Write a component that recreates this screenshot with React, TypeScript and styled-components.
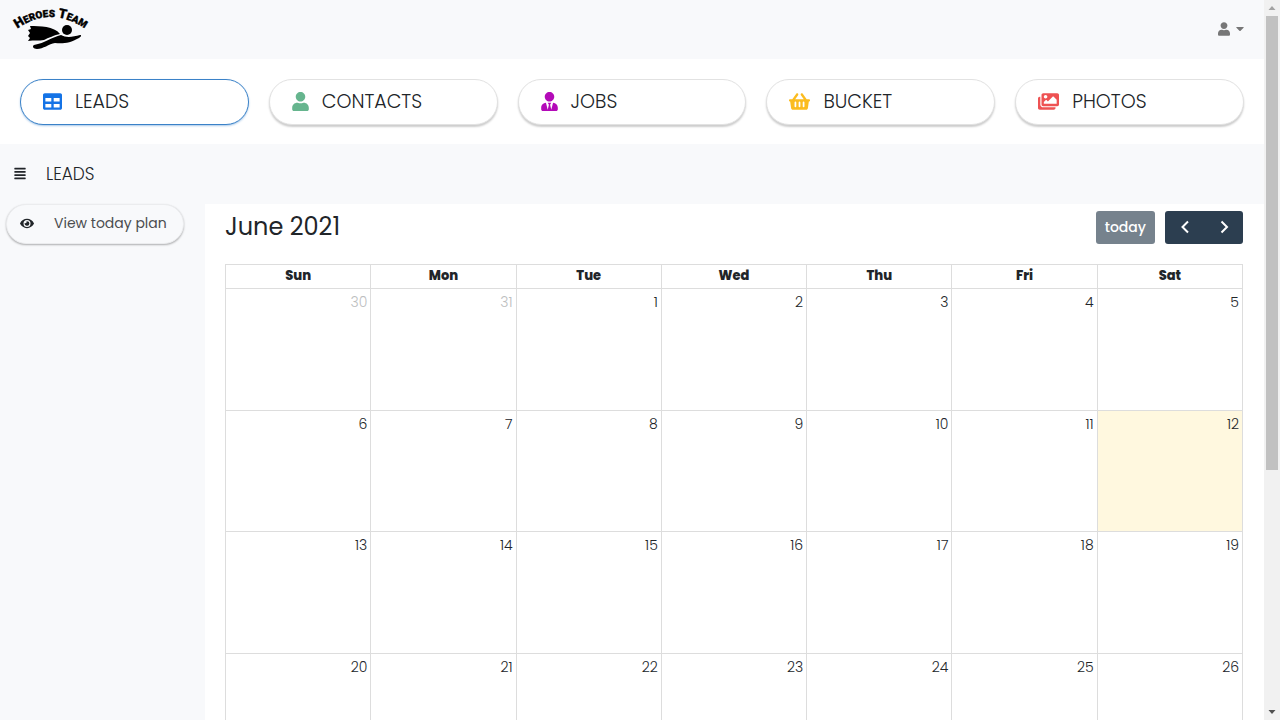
import React from "react";
import styled, { createGlobalStyle, css } from "styled-components";
import {
  FaAlignJustify,
  FaCaretDown,
  FaEye,
  FaImages,
  FaShoppingBasket,
  FaTable,
  FaUser,
  FaUserTie,
} from "react-icons/fa";

const GlobalStyle = createGlobalStyle`
  *, *::before, *::after { box-sizing: border-box; }
  body {
    margin: 0;
    background: #f8f9fb;
    color: #212529;
    font-family: Poppins, Inter, sans-serif;
    font-size: 14px;
    line-height: 20px;
  }
  button { font: inherit; cursor: pointer; }
`;

const Shell = styled.div`
  display: flex;
  height: 100vh;
`;

const Page = styled.div`
  flex: 1;
  min-width: 0;
  overflow-y: auto;
  scrollbar-width: none;
`;

const TopBar = styled.header`
  display: flex;
  align-items: center;
  justify-content: space-between;
  padding: 4px 20px 5px 12px;
`;

const Logo = styled.svg`
  display: block;
  width: 78px;
  height: 50px;
  overflow: visible;
`;

const Icon = styled.span<{ $width: number; $height: number; $color?: string }>`
  display: flex;
  color: ${(p) => p.$color ?? "inherit"};

  svg {
    width: ${(p) => p.$width}px;
    height: ${(p) => p.$height}px;
  }
`;

const AccountButton = styled.button`
  display: flex;
  align-items: center;
  gap: 6px;
  padding: 0 0 1px;
  border: 0;
  background: none;
  color: #777;
`;

const Modules = styled.nav`
  display: grid;
  grid-template-columns: repeat(5, 1fr);
  gap: 20px;
  padding: 20px 20px 19px;
  background: #fff;
`;

const pill = css`
  display: flex;
  align-items: center;
  border-radius: 24px;
  box-shadow: 0 1px 2px rgba(0, 0, 0, 0.3);
`;

const ModuleLink = styled.a<{ $active?: boolean }>`
  ${pill}
  gap: 13px;
  height: 46px;
  padding: 0 22px;
  border: 1px solid ${(p) => (p.$active ? "#3b82c8" : "#e2e2e2")};
  background: #fff;
  box-shadow: ${(p) => (p.$active ? "0 1px 2px rgba(40, 120, 200, 0.4)" : "0 2px 2px rgba(0, 0, 0, 0.2)")};
  color: #212529;
  font-size: 19px;
  font-weight: 300;
  text-decoration: none;

  ${Icon} { padding-bottom: 2px; }
`;

const SectionBar = styled.div`
  display: flex;
  align-items: center;
  gap: 20px;
  height: 60px;
  padding: 0 14px;
`;

const MenuButton = styled.button`
  display: flex;
  padding: 0 0 1px;
  border: 0;
  background: none;
  color: #212529;
`;

const SectionTitle = styled.h1`
  margin: 0;
  font-size: 17px;
  font-weight: 300;
`;

const Body = styled.div`
  display: flex;
  align-items: stretch;
`;

const Sidebar = styled.aside`
  flex: 0 0 205px;
  padding: 0 21px 0 6px;
`;

const PlanButton = styled.button`
  ${pill}
  gap: 20px;
  width: 100%;
  height: 40px;
  padding: 0 13px 2px;
  border: 1px solid #ebecee;
  background: #f8f9fb;
  color: #212529;
  white-space: nowrap;
`;

const PlanLabel = styled.span`
  color: #4b4d50;
`;

const Calendar = styled.main`
  flex: 1;
  min-width: 0;
  padding: 7px 21px 20px 20px;
  background: #fff;
`;

const CalendarBar = styled.div`
  display: flex;
  align-items: flex-start;
  justify-content: space-between;
  margin-bottom: 20px;
`;

const MonthTitle = styled.h2`
  margin: 0;
  font-size: 24px;
  font-weight: 400;
  line-height: 32px;
`;

const Controls = styled.div`
  display: flex;
  gap: 10px;
`;

const ButtonGroup = styled.div`
  display: flex;
  border-radius: 3px;
  overflow: hidden;
`;

const CalendarButton = styled.button`
  display: flex;
  align-items: center;
  justify-content: center;
  height: 33px;
  min-width: 39px;
  padding: 0 9px 1px;
  border: 0;
  background: #2c3e50;
  color: #fff;

  &:disabled {
    border-radius: 3px;
    background: #76828d;
    font-weight: 500;
  }
`;

const MonthTable = styled.table`
  width: 100%;
  height: 754px;
  border-collapse: collapse;
  table-layout: fixed;
`;

const DayName = styled.th`
  height: 24px;
  padding: 0 0 2px;
  border: 1px solid #ddd;
  font-size: 13px;
  font-weight: 800;
`;

const Day = styled.td<{ $muted: boolean; $today: boolean }>`
  padding: 3px;
  border: 1px solid #ddd;
  background: ${(p) => (p.$today ? "#fff8df" : "#fff")};
  color: ${(p) => (p.$muted ? "#bcbec0" : "#212529")};
  font-weight: 300;
  text-align: right;
  vertical-align: top;
`;

const Scrollbar = styled.div`
  display: flex;
  flex-direction: column;
  flex: 0 0 16px;
  align-items: center;
  justify-content: space-between;
  background: #f1f1f1;
`;

const Track = styled.div`
  flex: 1;
  width: 12px;
`;

const Thumb = styled.div`
  height: 66%;
  background: #c1c1c1;
`;

const ScrollArrow = styled.svg`
  display: block;
  width: 16px;
  height: 16px;
`;

const modules = [
  { label: "LEADS", icon: <FaTable />, width: 19, color: "#1473e6", active: true },
  { label: "CONTACTS", icon: <FaUser />, width: 17, color: "#66b58e" },
  { label: "JOBS", icon: <FaUserTie />, width: 17, color: "#b30ab8" },
  { label: "BUCKET", icon: <FaShoppingBasket />, width: 21, color: "#fbbc1f" },
  { label: "PHOTOS", icon: <FaImages />, width: 21, color: "#ee5253" },
];

const dayNames = ["Sun", "Mon", "Tue", "Wed", "Thu", "Fri", "Sat"];
const firstCell = new Date(2021, 4, 30);
const weeks = Array.from({ length: 6 }, (_, w) =>
  Array.from({ length: 7 }, (_, d) => {
    const date = new Date(firstCell);
    date.setDate(firstCell.getDate() + w * 7 + d);
    return { day: date.getDate(), inMonth: date.getMonth() === 5 };
  })
);

const HeroLogo = () => (
  <Logo viewBox="0 0 78 50" role="img" aria-label="Heroes Team">
    <path id="logo-arc" d="M2 27 Q39 -1 76 27" fill="none" />
    <text
      fontFamily="Roboto, 'Liberation Sans', sans-serif"
      fontWeight="900"
      fontSize="13"
      stroke="#000"
      strokeWidth="0.4"
      textAnchor="middle"
    >
      <textPath href="#logo-arc" startOffset="50%">
        H<tspan fontSize="10">EROES</tspan> T<tspan fontSize="10">EAM</tspan>
      </textPath>
    </text>
    <path d="M18 22 C28 22 42 22 48 30 C43 31 36 34 32 36 C27 37 22 36 16 37 L18 34 L16 32 L18 29 L16 26 L19 25 Z" />
    <circle cx="55" cy="26" r="5" />
    <path d="M22 41 C33 39 40 33 49 31 C54 34 61 33 68 31 C70 31 69 33 67 34 C58 39 51 40 43 39 C37 40 31 45 25 45 C21 45 20 42 22 41 Z" />
  </Logo>
);

const Chevron = ({ d }: { d: string }) => (
  <svg width="16" height="16" viewBox="0 0 16 16" fill="none" stroke="#fff" strokeWidth="2" aria-hidden="true">
    <path d={d} />
  </svg>
);

export default function App() {
  return (
    <>
      <GlobalStyle />
      <Shell>
        <Page>
          <TopBar>
            <HeroLogo />
            <AccountButton aria-label="Account">
              <Icon $width={12} $height={14}>
                <FaUser />
              </Icon>
              <Icon $width={8} $height={13}>
                <FaCaretDown />
              </Icon>
            </AccountButton>
          </TopBar>
          <Modules>
            {modules.map((m) => (
              <ModuleLink key={m.label} href="#" $active={m.active}>
                <Icon $width={m.width} $height={19} $color={m.color}>
                  {m.icon}
                </Icon>
                {m.label}
              </ModuleLink>
            ))}
          </Modules>
          <SectionBar>
            <MenuButton aria-label="Toggle menu">
              <Icon $width={12} $height={13}>
                <FaAlignJustify />
              </Icon>
            </MenuButton>
            <SectionTitle>LEADS</SectionTitle>
          </SectionBar>
          <Body>
            <Sidebar>
              <PlanButton>
                <Icon $width={14} $height={13}>
                  <FaEye />
                </Icon>
                <PlanLabel>View today plan</PlanLabel>
              </PlanButton>
            </Sidebar>
            <Calendar>
              <CalendarBar>
                <MonthTitle>June 2021</MonthTitle>
                <Controls>
                  <CalendarButton disabled>today</CalendarButton>
                  <ButtonGroup>
                    <CalendarButton aria-label="Previous month">
                      <Chevron d="M11 2.500 L5.500 8 L11 13.500" />
                    </CalendarButton>
                    <CalendarButton aria-label="Next month">
                      <Chevron d="M5.500 2.500 L11 8 L5.500 13.500" />
                    </CalendarButton>
                  </ButtonGroup>
                </Controls>
              </CalendarBar>
              <MonthTable>
                <thead>
                  <tr>
                    {dayNames.map((name) => (
                      <DayName key={name} scope="col">{name}</DayName>
                    ))}
                  </tr>
                </thead>
                <tbody>
                  {weeks.map((week, w) => (
                    <tr key={w}>
                      {week.map(({ day, inMonth }) => (
                        <Day key={day} $muted={!inMonth} $today={inMonth && day === 12}>
                          {day}
                        </Day>
                      ))}
                    </tr>
                  ))}
                </tbody>
              </MonthTable>
            </Calendar>
          </Body>
        </Page>
        <Scrollbar aria-hidden="true">
          <ScrollArrow viewBox="0 0 16 16">
            <path d="M4.500 10 L8 6 L11.500 10 Z" fill="#a3a3a3" />
          </ScrollArrow>
          <Track>
            <Thumb />
          </Track>
          <ScrollArrow viewBox="0 0 16 16">
            <path d="M4.500 6 L8 10 L11.500 6 Z" fill="#505050" />
          </ScrollArrow>
        </Scrollbar>
      </Shell>
    </>
  );
}
